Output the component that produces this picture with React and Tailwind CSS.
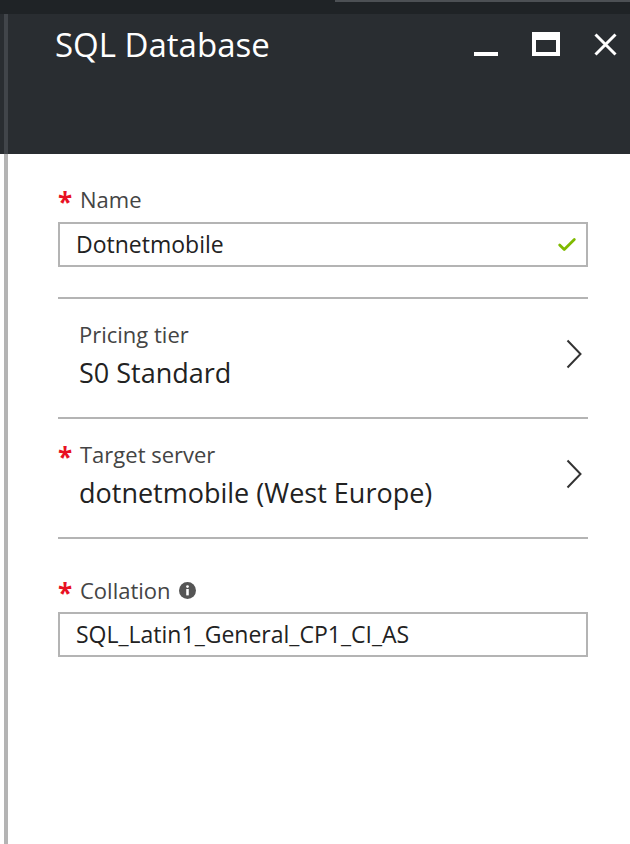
import { Check } from "lucide-react";

const font = { fontFamily: '"Open Sans", "Noto Sans", sans-serif' };

function Label({ required, children }) {
  return (
    <div className={`flex items-center text-[22px] text-[#444] h-[30px] ${required ? "" : "pl-[21px]"}`}>
      {required && (
        <span className="w-[22px] text-[26px] font-bold leading-none text-[#e81123] relative top-[3px]">*</span>
      )}
      {children}
    </div>
  );
}

function PickerRow({ required, label, value }) {
  return (
    <div className="flex items-start justify-between h-[120px] border-b-2 border-[#b4b4b4] pt-[20px]">
      <div>
        <Label required={required}>{label}</Label>
        <div className="pl-[21px] text-[27px] text-[#222] leading-[36px] mt-[6px]">{value}</div>
      </div>
      <svg width="16" height="30" viewBox="0 0 16 30" className="mr-[6px] mt-[20px]">
        <path d="M1.5 1.5 L14.5 15 L1.5 28.5" fill="none" stroke="#333" strokeWidth="2" />
      </svg>
    </div>
  );
}

function InfoDot() {
  return (
    <svg width="17" height="17" viewBox="0 0 16 16" className="ml-[8px] mt-[1px]">
      <circle cx="8" cy="8" r="8" fill="#555" />
      <circle cx="8" cy="4.3" r="1.3" fill="#fff" />
      <rect x="6.8" y="6.6" width="2.4" height="6" fill="#fff" />
    </svg>
  );
}

export default function App() {
  return (
    <div className="w-[630px] h-[844px] bg-white flex flex-col overflow-hidden" style={font}>
      {/* top strip */}
      <div className="h-[14px] bg-[#1f2326] flex shrink-0">
        <div className="w-[335px]" />
        <div className="flex-1 h-[2px] bg-[#4c5054]" />
      </div>

      {/* header */}
      <div className="h-[140px] bg-[#292d31] flex shrink-0">
        <div className="w-1" />
        <div className="w-1 bg-[#41454a]" />
        <div className="flex-1 flex items-start justify-between pl-[47px] pr-[13px] pt-[7px]">
          <h1 className="text-[33px] text-white leading-[48px]">SQL Database</h1>
          <div className="flex items-start gap-[34px] pt-[11px]">
            <div className="w-[24px] h-[24px] flex items-end">
              <div className="w-[24px] h-[4px] bg-white" />
            </div>
            <div className="w-[28px] h-[24px] border-4 border-t-8 border-white" />
            <svg width="23" height="23" viewBox="0 0 23 23" className="mt-[1px]">
              <path d="M1.5 1.5 L21.5 21.5 M21.5 1.5 L1.5 21.5" stroke="#fff" strokeWidth="3" />
            </svg>
          </div>
        </div>
      </div>

      {/* content */}
      <div className="flex-1 flex">
        <div className="w-1" />
        <div className="w-1 bg-[#b4b4b4]" />
        <div className="flex-1 pl-[50px] pr-[42px] pt-[30px]">
          <Label required>Name</Label>
          <div className="mt-[8px] h-[45px] border-2 border-[#b4b4b4] flex items-center justify-between pl-[16px] pr-[8px]">
            <span className="text-[23px] text-[#222]">Dotnetmobile</span>
            <Check size={22} strokeWidth={3} color="#7fba00" />
          </div>

          <div className="mt-[30px] border-t-2 border-[#b4b4b4]" />
          <PickerRow label="Pricing tier" value="S0 Standard" />
          <PickerRow required label="Target server" value="dotnetmobile (West Europe)" />

          <div className="mt-[36px]">
            <Label required>
              Collation
              <InfoDot />
            </Label>
          </div>
          <div className="mt-[7px] h-[45px] border-2 border-[#b4b4b4] flex items-center pl-[16px]">
            <span className="text-[23px] text-[#222]">SQL_Latin1_General_CP1_CI_AS</span>
          </div>
        </div>
      </div>
    </div>
  );
}
